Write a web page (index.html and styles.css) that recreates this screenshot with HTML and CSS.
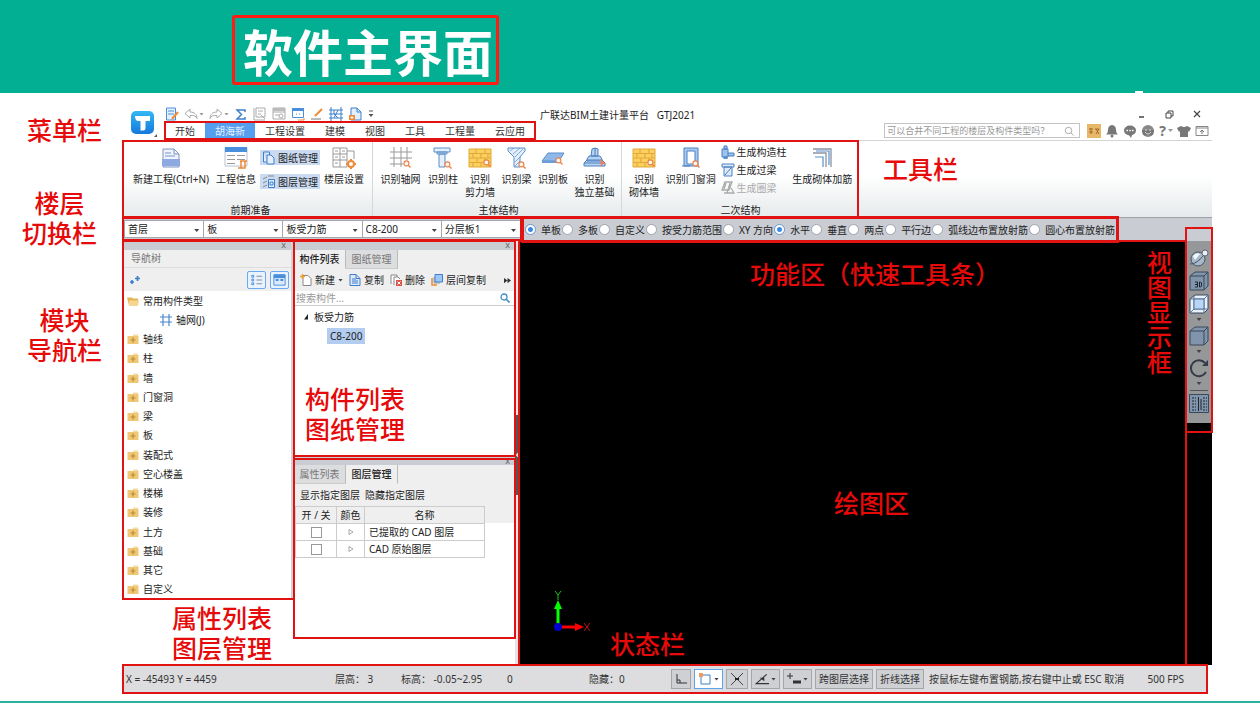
FILE: index.html
```html
<!DOCTYPE html>
<html lang="zh-CN">
<head>
<meta charset="utf-8">
<title>软件主界面</title>
<link rel="stylesheet" href="styles.css">
</head>
<body>
<svg class="defs" aria-hidden="true">
  <defs>
    <linearGradient id="blue" x1="0" y1="0" x2="0" y2="1"><stop offset="0" stop-color="#35b8f5"/><stop offset="1" stop-color="#1478dc"/></linearGradient>
    <symbol id="lens" viewBox="0 0 8 8"><circle cx="3.4" cy="3.4" r="2.5" fill="#fff5ee" stroke="#e8824a" stroke-width="1.1"/><path d="M5.2 5.2L7.5 7.5" stroke="#e8824a" stroke-width="1.4"/></symbol>
    <symbol id="wall" viewBox="0 0 24 20"><path d="M1 1h22v18H1z" fill="#fbd05f" stroke="#e2a93a"/><path d="M1 5.5h22M1 10h22M1 14.500h22M8 1v4.500M17 1v4.500M5 5.500V10M13 5.500V10M20 5.500V10M9 10v4.500M17 10v4.500M5 14.500V19M13 14.500V19" stroke="#e2a93a" stroke-width="1.100" fill="none"/><use href="#lens" x="15" y="11" width="8" height="8"/></symbol>
    <symbol id="folder" viewBox="0 0 12 11"><path d="M6 1h5v2H6z" fill="#f3dca6"/><path d="M.5 2.500h11v8H.5z" fill="#f0c875"/><path d="M3.500 6.500h5M6 4v5" stroke="#b98a35" stroke-width="1.200"/></symbol>
    <symbol id="cube" viewBox="0 0 20 20"><path d="M1 5l5-4h13v14l-4 4H1z" fill="#8094ab" stroke="#3c4858"/><path d="M1 5h14v14M15 5l4-4" fill="none" stroke="#3c4858"/></symbol>
    <symbol id="undo" viewBox="0 0 14 12"><path d="M6 1L1 5.500 6 10V7.500c4-.5 6 .5 7 3 0-4-2.500-6.500-7-6.500z" fill="none" stroke="#aaa"/></symbol>
  </defs>
</svg>

<header class="banner"><h1 class="marked">软件主界面</h1></header>

<div class="slide">
  <aside class="notes">
    <p class="note n1">菜单栏</p>
    <p class="note n2">楼层<br>切换栏</p>
    <p class="note n3">模块<br>导航栏</p>
  </aside>

  <div class="app">
    <div class="top">
      <svg class="logo" viewBox="0 0 30 30"><rect x="1" y="1" width="23" height="23" rx="5" fill="url(#blue)"/><path d="M5 6h15v5h-4.500v7q0 2.500-2.500 2.500h-2.500V11H7.500Q5 10 5 6z" fill="#fff"/><path d="M24 27l3-3v3z" fill="#555"/></svg>
      <div class="topmain">
        <div class="row1">
          <div class="qat">
            <svg class="i14" viewBox="0 0 14 14"><path d="M1.500 1h9v12h-9zM3 4h6M3 7h6" fill="#e6f1fd" stroke="#4a8fdc"/><path d="M7 12l6-7" stroke="#ef8a35" stroke-width="2"/></svg>
            <svg class="i14" viewBox="0 0 14 12"><use href="#undo"/></svg><i class="tri pale"></i>
            <svg class="i14 flip" viewBox="0 0 14 12"><use href="#undo"/></svg><i class="tri pale"></i>
            <svg class="i14" viewBox="0 0 14 14"><path d="M11 5V3H3l4.500 4.500L3 12h8v-2" fill="none" stroke="#3f7fca" stroke-width="1.500"/></svg>
            <svg class="i14" viewBox="0 0 14 14"><path d="M3 1h9v9H3zM1 1v12h11M5 4h5M5 7h3" fill="none" stroke="#aaa"/><path d="M8 8l4 4" stroke="#aaa"/></svg>
            <svg class="i14" viewBox="0 0 14 14"><path d="M1 1h12v11H1zM1 5h12M3 8h4" fill="none" stroke="#aaa"/><path d="M1 1h12v3H1z" fill="#bbb"/><circle cx="9" cy="9" r="2" fill="#fff" stroke="#aaa"/></svg>
            <svg class="i14" viewBox="0 0 14 14"><path d="M1.500 1.500h11v9h-11z" fill="#fff" stroke="#4a8fdc"/><path d="M1 1h12v3H1z" fill="#4a8fdc"/><path d="M5 7h1M8 7h1" stroke="#4a8fdc"/><path d="M7 13h6v-2" stroke="#ef8a35" fill="none"/></svg>
            <svg class="i14" viewBox="0 0 14 14"><path d="M5 9l7-7" stroke="#ef8a35" stroke-width="2"/><path d="M1 12h10" stroke="#777"/></svg>
            <svg class="i14" viewBox="0 0 14 14"><path d="M2 0v14M12 0v14M0 3h14M0 7h14M0 11h14M5 3v4l4 4M9 3L5 11" fill="none" stroke="#3f7fca"/></svg>
            <svg class="i14" viewBox="0 0 14 14"><path d="M3 1h6l4 4v8H3z" fill="#e3effc" stroke="#3f7fca"/><path d="M9 1v4h4" fill="none" stroke="#3f7fca"/><path d="M1 8h6v5H1z" fill="#ef8a35"/><path d="M2.500 10.500h3M4 9v3" stroke="#fff"/></svg>
            <svg class="i8" viewBox="0 0 8 10"><path d="M2 2h4" stroke="#555"/><path d="M1.500 5h5L4 8z" fill="#555"/></svg>
          </div>
          <div class="apptitle">广联达BIM土建计量平台 &nbsp; GTJ2021</div>
          <div class="win">
            <button aria-label="最小化"><svg viewBox="0 0 10 10"><path d="M3 8h5" stroke="#444" stroke-width="1.500"/></svg></button>
            <button aria-label="还原"><svg viewBox="0 0 10 10"><path d="M2 4h5v5H2zM4 4V2h5v5H7" fill="none" stroke="#444"/></svg></button>
            <button aria-label="关闭"><svg viewBox="0 0 10 10"><path d="M2 2l6 6M8 2L2 8" stroke="#444" stroke-width="1.200"/></svg></button>
          </div>
        </div>
        <div class="row2">
          <nav class="tabs marked"><button>开始</button><button class="on">胡海新</button><button>工程设置</button><button>建模</button><button>视图</button><button>工具</button><button>工程量</button><button>云应用</button></nav>
          <div class="tools">
            <div class="find"><input type="text" aria-label="搜索" placeholder="可以合并不同工程的楼层及构件类型吗？"><svg class="i10" viewBox="0 0 10 10"><circle cx="4.500" cy="4.500" r="3.200" fill="none" stroke="#aaa"/><path d="M7 7l2.500 2.500" stroke="#aaa"/></svg></div>
            <svg class="i14" viewBox="0 0 14 14"><path d="M0 0h14v14H0z" fill="#e8b868"/><path d="M2 5h4M2 8h4M4 4v6M8 5h4l-3 5M9 5l3 5" stroke="#a36a2c" fill="none"/></svg>
            <svg class="i14" viewBox="0 0 14 14"><path d="M7 1q4 .5 4 5 0 3 2 4.500H1Q3 9 3 6q0-4.500 4-5z" fill="#777"/><circle cx="7" cy="12" r="1.500" fill="#777"/></svg>
            <svg class="i14" viewBox="0 0 14 14"><ellipse cx="7" cy="6.500" rx="6" ry="5" fill="#777"/><path d="M6 11l2 3 1-3z" fill="#777"/><path d="M3.500 6.500h1.500M6.300 6.500h1.500M9 6.500h1.500" stroke="#fff" stroke-width="1.500"/></svg>
            <svg class="i14" viewBox="0 0 14 14"><circle cx="7" cy="7" r="6" fill="#888"/><path d="M1 6h12l-1 5H2z" fill="#777"/><path d="M4 8q3 4 6 0M4 6h2M8 6h2" fill="none" stroke="#ddd"/></svg>
            <span class="help">?<i class="tri pale"></i></span>
            <svg class="i14" viewBox="0 0 14 14"><path d="M4 2q3 2 6 0l4 2-2 4-1-1v6H3V7L2 8 0 4z" fill="#777"/></svg>
            <svg class="i14" viewBox="0 0 14 12"><path d="M1 1.500h12v9H1zM1 3h12" fill="none" stroke="#888"/><path d="M5 7l2-2 2 2M7 5.500V9" fill="none" stroke="#777"/></svg>
          </div>
        </div>
      </div>
    </div>

    <div class="ribbon">
      <div class="groups marked">
        <section class="group g1">
          <div class="items">
            <button class="it w84"><svg viewBox="0 0 20 20"><path d="M2 1h11l5 5v13H2z" fill="#eef3fc" stroke="#7e93c5"/><path d="M13 1v5h5M4 5h6M4 8h10" fill="none" stroke="#7e93c5"/><path d="M1 11h18v7H1z" fill="#8ea9e0"/></svg>新建工程(Ctrl+N)</button>
            <button class="it w46"><svg class="wide" viewBox="0 0 24 22"><path d="M1 1h22v18H1z" fill="#fff" stroke="#b8c4d0"/><path d="M1 0h22v5H1z" fill="#4a8fdc"/><path d="M3 8.500h8M3 12.500h8M3 16.500h8M13 8.500h8M13 12.500h8" stroke="#999"/><path d="M16 14h7M17 14v7h-3M21 14v7h-5" fill="none" stroke="#ef8a35" stroke-width="1.500"/></svg>工程信息</button>
            <div class="stack chips">
              <button><svg class="i14" viewBox="0 0 14 14"><path d="M1.500 1h6v3M1.500 1v10h3M5 4h4l3 3v6H5z" fill="#e3effc" stroke="#3f7fca"/></svg>图纸管理</button>
              <button><svg class="i14" viewBox="0 0 14 14"><path d="M1 4l4-2M1 8l4-2M1 12l4-2M6 1h6" stroke="#888"/><path d="M6.500 4.500h6v8h-6zM8 7h3v3H8z" fill="#e3effc" stroke="#3f7fca"/></svg>图层管理</button>
            </div>
            <button class="it w46"><svg class="wide" viewBox="0 0 24 22"><path d="M1 1h14v19H1zM1 7h14M1 13h14M8 1v19M15 4h7v8" fill="none" stroke="#999"/><path d="M3 4h3M10 4h3M3 10h3M10 10h3M3 16h3" stroke="#999"/><circle cx="19" cy="17" r="3" fill="#fff" stroke="#ef8a35" stroke-width="2"/><path d="M19 12v2M19 20v2M14 17h2M22 17h2" stroke="#ef8a35" stroke-width="2"/></svg>楼层设置</button>
          </div>
          <h2>前期准备</h2>
        </section>
        <section class="group g2">
          <div class="items">
            <button class="it w49"><svg class="wide" viewBox="0 0 24 22"><path d="M5 0v20M12 0v20M18 0v13M1 5h22M1 11h22M1 17h13" stroke="#999" fill="none"/><use href="#lens" x="14" y="13" width="8" height="8"/></svg>识别轴网</button>
            <button class="it w36"><svg viewBox="0 0 20 22"><path d="M1 1h16v4H1zM4 5h10v2H4zM6 7h6v13H6z" fill="#e3effc" stroke="#5a8fc8"/><use href="#lens" x="11" y="14" width="8" height="8"/></svg>识别柱</button>
            <button class="it w38"><svg class="wide" viewBox="0 0 24 20"><use href="#wall"/></svg>识别<br>剪力墙</button>
            <button class="it w35"><svg viewBox="0 0 20 22"><path d="M1 1h17v3l-5 6v10H7V10L1 4z" fill="#e3effc" stroke="#5a8fc8"/><path d="M3 4l4-3M6 7l7-6M8 10l8-8M8 15l5-5M8 19l5-5" stroke="#5a8fc8" stroke-width=".7"/><use href="#lens" x="11" y="14" width="8" height="8"/></svg>识别梁</button>
            <button class="it w38"><svg class="wide" viewBox="0 0 24 20"><path d="M7 5h16l-5 8H1z" fill="#8fb8ea" stroke="#5a8fc8"/><path d="M1 13h17v2H1z" fill="#6d9cd8"/><use href="#lens" x="14" y="9" width="8" height="8"/></svg>识别板</button>
            <button class="it w45"><svg class="wide" viewBox="0 0 24 22"><path d="M1 16l3-3h15l3 3v3H1zM4 12l2-3h11l2 3v2H4zM8 9l1-7 3-1 3 1v7z" fill="#b8d3f2" stroke="#4a80c0"/><path d="M12 1v8M1 16h21" fill="none" stroke="#4a80c0"/><path d="M17 12l6 5h-3l-2 3z" fill="#ee8262"/></svg>识别<br>独立基础</button>
          </div>
          <h2>主体结构</h2>
        </section>
        <section class="group g3">
          <div class="items">
            <button class="it w40"><svg class="wide" viewBox="0 0 24 20"><use href="#wall"/></svg>识别<br>砌体墙</button>
            <button class="it w54"><svg viewBox="0 0 20 22"><path d="M3 1h14v18H3z" fill="#a9caf2" stroke="#4a80c0"/><path d="M6 4h8v13H6z" fill="#fff" stroke="#4a80c0"/><path d="M1 19h8" stroke="#4a80c0"/><use href="#lens" x="11" y="13" width="8" height="8"/></svg>识别门窗洞</button>
            <div class="stack plain">
              <button><svg class="i14" viewBox="0 0 14 14"><path d="M3 1h3v3H3zM1 4h6v8H1zM3 12h3v2H3zM7 8h6v3H7" fill="#9cc2ee" stroke="#4a80c0"/></svg>生成构造柱</button>
              <button><svg class="i14" viewBox="0 0 14 14"><path d="M1 1h12v3H1zM3 4h8v9H3z" fill="#dceafa" stroke="#4a80c0"/><path d="M4 12l6-7" stroke="#4a80c0"/></svg>生成过梁</button>
              <button disabled><svg class="i14" viewBox="0 0 14 14"><path d="M4 1h7L8 9H1zM3 12h10L10 7M5 2l-2 6M9 2L6 12" fill="none" stroke="#aaa" stroke-width="1.300"/></svg>生成圈梁</button>
            </div>
            <button class="it w70"><svg viewBox="0 0 20 20"><path d="M1 1h18v18M1 5h13v14" fill="none" stroke="#8a94a4" stroke-width="1.300"/><path d="M3 9h8v10M4 3h13v14" fill="none" stroke="#5a8fc8" stroke-width="1.200"/></svg>生成砌体加筋</button>
          </div>
          <h2>二次结构</h2>
        </section>
      </div>
      <p class="note">工具栏</p>
    </div>

    <div class="bar">
      <div class="picks marked">
        <label class="sel"><select aria-label="楼层"><option>首层</option></select></label>
        <label class="sel"><select aria-label="构件"><option>板</option></select></label>
        <label class="sel"><select aria-label="类型"><option>板受力筋</option></select></label>
        <label class="sel"><select aria-label="名称"><option>C8-200</option></select></label>
        <label class="sel"><select aria-label="分层"><option>分层板1</option></select></label>
      </div>
      <div class="opts marked">
        <label><input type="radio" name="area" checked>单板</label>
        <label><input type="radio" name="area">多板</label>
        <label><input type="radio" name="area">自定义</label>
        <label><input type="radio" name="area">按受力筋范围</label>
        <label><input type="radio" name="dir">XY 方向</label>
        <label><input type="radio" name="dir" checked>水平</label>
        <label><input type="radio" name="dir">垂直</label>
        <label><input type="radio" name="dir">两点</label>
        <label><input type="radio" name="dir">平行边</label>
        <label><input type="radio" name="dir">弧线边布置放射筋</label>
        <label><input type="radio" name="dir">圆心布置放射筋</label>
      </div>
    </div>

    <main class="work">
      <div class="nav">
        <div class="navbox marked">
          <div class="strip">x</div>
          <div class="navtitle">导航树</div>
          <div class="navtools">
            <svg class="i12" viewBox="0 0 12 12"><path d="M1 8h4M3 6v4M6 4.500h5M8.500 2v5" stroke="#3f7fca" stroke-width="1.700"/></svg>
            <button aria-label="列表"><svg viewBox="0 0 16 14"><path d="M3 2h2v2H3zM3 6h2v2H3zM3 10h2v2H3z" fill="none" stroke="#4a8fdc"/><path d="M8 3h6M8 7h6M8 11h6" stroke="#888"/></svg></button>
            <button aria-label="图标"><svg viewBox="0 0 16 14"><path d="M2 1.500h12v11H2z" fill="#dceafa" stroke="#4a8fdc"/><path d="M2 1h12v4H2z" fill="#4a8fdc"/><path d="M4 7h3M9 7h3" stroke="#4a8fdc" stroke-width="2"/></svg></button>
          </div>
          <ul class="tree">
            <li><svg viewBox="0 0 12 11"><path d="M0 2h5l1 1h5v7H2z" fill="#e6b455"/><path d="M2 5h10l-1 5H2z" fill="#f6d58c"/></svg>常用构件类型</li>
            <li class="sub"><svg viewBox="0 0 12 12"><path d="M3 0v12M9 0v12M0 3h12M0 8h12" stroke="#4a86cc" stroke-width="1.200"/></svg>轴网(J)</li>
            <li><svg><use href="#folder"/></svg>轴线</li>
            <li><svg><use href="#folder"/></svg>柱</li>
            <li><svg><use href="#folder"/></svg>墙</li>
            <li><svg><use href="#folder"/></svg>门窗洞</li>
            <li><svg><use href="#folder"/></svg>梁</li>
            <li><svg><use href="#folder"/></svg>板</li>
            <li><svg><use href="#folder"/></svg>装配式</li>
            <li><svg><use href="#folder"/></svg>空心楼盖</li>
            <li><svg><use href="#folder"/></svg>楼梯</li>
            <li><svg><use href="#folder"/></svg>装修</li>
            <li><svg><use href="#folder"/></svg>土方</li>
            <li><svg><use href="#folder"/></svg>基础</li>
            <li><svg><use href="#folder"/></svg>其它</li>
            <li><svg><use href="#folder"/></svg>自定义</li>
          </ul>
        </div>
        <p class="note">属性列表<br>图层管理</p>
      </div>

      <div class="panels">
        <section class="comp marked">
          <div class="strip">x</div>
          <div class="ptabs"><button class="on">构件列表</button><button>图纸管理</button></div>
          <div class="ptools">
            <button><svg class="i12" viewBox="0 0 12 12"><path d="M3 1.500h5l3 3v7H3z" fill="#fff" stroke="#888"/><path d="M0 2.500h5M2.500 0v5" stroke="#f0a030" stroke-width="1.500"/></svg>新建<i class="tri"></i></button>
            <button><svg class="i12" viewBox="0 0 12 12"><path d="M1 .5h6l4 4v7H1z" fill="#dceafa" stroke="#3f7fca"/><path d="M3 5h4M3 7h6M3 9h6M7 .5v4h4" fill="none" stroke="#3f7fca"/></svg>复制</button>
            <button><svg class="i12" viewBox="0 0 12 12"><path d="M1 10V1h6v2M4 11V3h4l2 2" fill="#fff" stroke="#888"/><path d="M6 6h6v6H6z" fill="#d9534f"/><path d="M7.500 7.500l3 3M10.500 7.500l-3 3" stroke="#fff"/></svg>删除</button>
            <button><svg class="i12" viewBox="0 0 12 12"><path d="M1 4v7h5" fill="none" stroke="#ef8a35" stroke-width="1.500"/><path d="M3 3v6h6" fill="none" stroke="#999"/><path d="M4 .5h7.500V8H4z" fill="#9cc8f7" stroke="#3f7fca"/></svg>层间复制</button>
            <svg class="more" viewBox="0 0 8 8"><path d="M0 1l4 3-4 3zM4 1l4 3-4 3z" fill="#333"/></svg>
          </div>
          <div class="psearch"><input type="text" aria-label="搜索构件" placeholder="搜索构件..."><svg class="i10" viewBox="0 0 10 10"><circle cx="4" cy="4" r="3" fill="none" stroke="#3f8fc0" stroke-width="1.300"/><path d="M6.500 6.500L9.500 9.500" stroke="#3f8fc0" stroke-width="1.600"/></svg></div>
          <div class="ctree">
            <div><svg class="caret" viewBox="0 0 6 6"><path d="M5 0v5.500H1z" fill="#222"/></svg>板受力筋</div>
            <span class="picked">C8-200</span>
          </div>
          <p class="note">构件列表<br>图纸管理</p>
        </section>
        <section class="props marked">
          <div class="strip">x</div>
          <div class="ptabs"><button>属性列表</button><button class="on">图层管理</button></div>
          <div class="links"><button>显示指定图层</button><button>隐藏指定图层</button></div>
          <div class="tablewrap">
            <table>
              <colgroup><col class="c1"><col class="c2"><col></colgroup>
              <thead><tr><th>开 / 关</th><th>颜色</th><th>名称</th></tr></thead>
              <tbody>
                <tr><td><input type="checkbox" aria-label="已提取的 CAD 图层"></td><td><svg class="caret" viewBox="0 0 6 6"><path d="M1 .5l4 2.500-4 2.500z" fill="none" stroke="#888" stroke-width=".7"/></svg></td><td class="nm">已提取的 CAD 图层</td></tr>
                <tr><td><input type="checkbox" aria-label="CAD 原始图层"></td><td><svg class="caret" viewBox="0 0 6 6"><path d="M1 .5l4 2.500-4 2.500z" fill="none" stroke="#888" stroke-width=".7"/></svg></td><td class="nm">CAD 原始图层</td></tr>
              </tbody>
            </table>
          </div>
        </section>
      </div>

      <div class="split"><button aria-label="折叠"><svg viewBox="0 0 4 6"><path d="M3.500 0v6L.5 3z" fill="#ddd"/></svg></button></div>

      <div class="canvas">
        <div class="stage marked">
          <p class="note func">功能区（快速工具条）</p>
          <p class="note draw">绘图区</p>
          <p class="note stat">状态栏</p>
          <p class="note view">视图显示框</p>
          <svg class="axis" viewBox="0 0 48 42"><path d="M14 38V18" stroke="#0f0" stroke-width="3"/><path d="M14 10l4 9h-8z" fill="#0f0"/><path d="M14 37h18" stroke="#f00" stroke-width="3"/><path d="M40 37l-9-4v8z" fill="#f00"/><circle cx="14" cy="37" r="4" fill="#00c"/><path d="M11 1l3 4 3-4M14 5v5" fill="none" stroke="#1dc41d"/><path d="M40 33l6 8M46 33l-6 8" stroke="#c01010"/></svg>
        </div>
        <div class="side marked">
          <div class="viewbar">
            <svg viewBox="0 0 20 20"><circle cx="9" cy="11" r="7" fill="#a9b8c8" stroke="#465465"/><path d="M4 8q3-4 7-2l-5 6z" fill="#f2f6fa"/><path d="M1 16Q8 17 18 3" fill="none" stroke="#465465"/><circle cx="16" cy="5" r="3" fill="#e8eff5" stroke="#667"/></svg>
            <svg viewBox="0 0 20 20"><use href="#cube"/><path d="M6 11h2.500v5H6M6 13.500h2.500M10.500 11v5h1l1-1v-3l-1-1z" fill="none" stroke="#1c2430"/></svg>
            <svg viewBox="0 0 20 20"><path d="M1 5l5-4h13v14l-4 4H1z" fill="#e6f2ff" stroke="#3c4858"/><path d="M1 5h14v14M15 5l4-4M5 1v14h14M5 15l-4 4" fill="none" stroke="#5b7290"/><path d="M5 5h10v10H5z" fill="#b7d6f7" stroke="#5b7290"/></svg>
            <i class="tri"></i>
            <svg viewBox="0 0 20 20"><use href="#cube"/></svg>
            <i class="tri"></i>
            <svg viewBox="0 0 20 20"><path d="M16 5A8 8 0 1 0 17 14" fill="none" stroke="#333c48" stroke-width="2"/><path d="M19 2v6h-6z" fill="#333c48"/></svg>
            <i class="tri"></i>
            <hr>
            <svg viewBox="0 0 20 20"><path d="M.5.5h19v18H.5z" fill="#8094ab" stroke="#3c4858"/><path d="M3 4h4M3 7h4M3 10h4M3 13h4M3 16h4M14 4h4M14 7h4M14 10h4M14 13h4M14 16h4" stroke="#1c2430" stroke-dasharray="2 1"/><path d="M9.500 3v14M12 5v11" stroke="#1c2430"/></svg>
          </div>
        </div>
      </div>
    </main>

    <footer class="status marked">
      <span class="s1">X = -45493 Y = 4459</span>
      <span class="s2">层高： 3</span>
      <span class="s3">标高： -0.05~2.95</span>
      <span class="s4">0</span>
      <span class="s5">隐藏：0</span>
      <div class="sbtns">
        <button aria-label="正交"><svg class="i12" viewBox="0 0 12 12"><path d="M2 1v9h10M2 7h3v3" fill="none" stroke="#333"/></svg></button>
        <button class="hot" aria-label="矩形"><svg class="i14" viewBox="0 0 14 14"><path d="M3 3h9v9H3z" fill="#fff" stroke="#3f7fca"/><path d="M1 1h4v4H1z" fill="#f09a60"/></svg><i class="tri"></i></button>
        <button aria-label="交点"><svg class="i14" viewBox="0 0 14 14"><path d="M1 1l12 12M13 1L1 13" stroke="#444"/><path d="M5 7h4" stroke="#222" stroke-width="2"/></svg></button>
        <button aria-label="角度"><svg class="i14" viewBox="0 0 12 12"><path d="M10 2L1 10h11" fill="none" stroke="#333"/><path d="M4 5h4v3z" fill="#333"/></svg><i class="tri"></i></button>
        <button aria-label="偏移"><svg class="i14" viewBox="0 0 14 14"><path d="M0 4h6M3 1v6" stroke="#333"/><path d="M6 10h8" stroke="#333" stroke-width="3"/></svg><i class="tri"></i></button>
        <button>跨图层选择</button>
        <button>折线选择</button>
      </div>
      <span class="s6">按鼠标左键布置钢筋,按右键中止或 ESC 取消</span>
      <span class="s7">500 FPS</span>
    </footer>
  </div>
</div>
<div class="rule"></div>
</body>
</html>
```
FILE: styles.css
```css
* { box-sizing: border-box; }

body {
  margin: 0;
  min-height: 100vh;
  display: flex;
  flex-direction: column;
  background: #fff;
  color: #222;
  font: 10px/14px "Noto Sans", "Noto Sans CJK SC", sans-serif;
}

h1, h2, p, ul { margin: 0; padding: 0; }
svg { display: block; flex: none; }
button {
  border: 0;
  padding: 0;
  background: none;
  color: inherit;
  font: inherit;
  white-space: nowrap;
}
input, select { font: inherit; color: inherit; margin: 0; }

.defs { position: absolute; width: 0; height: 0; }
.i8 { width: 8px; height: 10px; }
.i10 { width: 10px; height: 10px; }
.i12 { width: 12px; height: 12px; }
.i14 { width: 14px; height: 14px; }
.flip { transform: scaleX(-1); }
.tri {
  width: 5px;
  height: 3px;
  flex: none;
  background: #444;
  clip-path: polygon(0 0, 100% 0, 50% 100%);
}
.tri.pale { background: #999; }

/* Red frame round a described region */
.marked { position: relative; }
.marked::after {
  content: "";
  position: absolute;
  inset: -1px;
  border: 2px solid #e01212;
  pointer-events: none;
  z-index: 2;
}

.note {
  color: #e60a0a;
  font: 500 25px/30px "Liberation Serif", "Noto Sans CJK SC", serif;
  white-space: nowrap;
}

.banner {
  height: 93px;
  padding: 16px 0 0 233px;
  background: linear-gradient(#fff, #fff) 1135px bottom / 8px 2px no-repeat, #02af92;
}
.banner h1 {
  width: max-content;
  padding: 0 5px 0 10px;
  color: #fff;
  font: bold 50px/68px "Noto Sans CJK SC", sans-serif;
}
.banner h1::after { border: 3px solid #ff1c12; border-radius: 3px; }

.slide {
  flex: 1;
  display: grid;
  grid-template-columns: 123px 1fr;
  padding-right: 48px;
}
.notes { padding: 24px 0 0 6px; text-align: center; }
.n2 { margin: 43px 10px 0 0; }
.n3 { margin-top: 57px; }

.app { display: flex; flex-direction: column; padding-top: 13px; min-width: 0; }

.top { display: flex; border-bottom: 1px solid #d4d4d4; }
.logo { width: 30px; height: 30px; margin: 4px 5px 0 7px; }
.topmain { flex: 1; }
.row1 { display: flex; align-items: center; height: 16px; }
.qat { display: flex; align-items: center; gap: 5px; width: 375px; }
.qat .tri { margin-left: -4px; }
.apptitle { flex: 1; padding: 2px 0 0; }
.win { display: flex; gap: 18px; padding-right: 10px; }
.win svg { width: 10px; height: 10px; }
.row2 { display: flex; justify-content: space-between; height: 17px; }
.tabs { display: flex; }
.tabs button { padding: 0 10px; color: #333; }
.tabs .on { background: #559fee; color: #e4f1ff; }
.tools { display: flex; align-items: center; gap: 4px; padding-right: 3px; }
.find {
  display: flex;
  align-items: center;
  width: 196px;
  height: 15px;
  padding-right: 5px;
  margin-right: 3px;
  border: 1px solid #c4c4c4;
}
.find input { flex: 1; min-width: 0; height: 13px; padding: 0 2px; border: 0; font-size: 9px; }
input::placeholder { color: #999; opacity: 1; }
.help { display: flex; align-items: center; gap: 2px; color: #777; font-size: 14px; font-weight: bold; }

.ribbon {
  display: flex;
  height: 76px;
  background: linear-gradient(#fff 45%, #e6eaec);
}
.groups { display: flex; }
.group { display: flex; flex-direction: column; justify-content: space-between; border-right: 1px solid #d5d8da; }
.g1 { width: 250px; padding-left: 6px; }
.g2 { width: 249px; padding-left: 3px; }
.g3 { width: 236px; padding-left: 2px; }
.group h2 { font: inherit; text-align: center; }
.items { display: flex; }
.it {
  display: flex;
  flex-direction: column;
  align-items: center;
  padding-top: 6px;
  line-height: 13px;
}
.it svg { width: 20px; height: 22px; margin-bottom: 4px; }
.it svg.wide { width: 24px; }
.w35 { width: 35px; }
.w36 { width: 36px; }
.w38 { width: 38px; }
.w40 { width: 40px; }
.w45 { width: 45px; }
.w46 { width: 46px; }
.w49 { width: 49px; }
.w54 { width: 54px; }
.w70 { width: 70px; }
.w84 { width: 84px; }
.stack { display: flex; flex-direction: column; align-items: flex-start; }
.stack button { display: flex; align-items: center; gap: 2px; }
.stack button:disabled { color: #aaa; }
.chips { width: 62px; padding: 9px 0 0 1px; gap: 9px; }
.chips button { height: 15px; padding: 0 2px; background: #c9daf1; }
.plain { width: 70px; padding: 4px 0 0 3px; gap: 4px; }
.ribbon > .note { margin: 15px 0 0 25px; }

.bar {
  display: flex;
  height: 24px;
  border-top: 1px solid #9ea2a6;
  background: #c9ccd2;
}
.picks { display: flex; width: 398px; padding: 2px 0 3px 2px; }
.picks::after { bottom: 0; }
.sel { position: relative; flex: 1; border: 1px solid #a4a8ae; margin-left: -1px; background: #fff; }
.sel::after {
  content: "";
  position: absolute;
  right: 4px;
  top: 8px;
  width: 5px;
  height: 3px;
  background: #444;
  clip-path: polygon(0 0, 100% 0, 50% 100%);
}
.sel select { display: block; width: 100%; height: 16px; padding: 0 3px; border: 0; background: none; appearance: none; }
.opts { display: flex; align-items: center; gap: 1px; padding: 0 4px; margin: -2px 0; }
.opts::after { border-width: 3px; inset: 0; }
.opts label { display: flex; align-items: center; gap: 5px; white-space: nowrap; }
.opts input {
  appearance: none;
  width: 11px;
  height: 11px;
  border: 1px solid #a0a4aa;
  border-radius: 50%;
  background: #fff;
}
.opts input:checked { background: radial-gradient(circle, #3d8ae6 2px, #fff 3px); border-color: #6d9bd0; }

.work { flex: 1; display: flex; }
.strip { height: 9px; padding-right: 5px; background: #c9ccd2; color: #666; font-size: 9px; line-height: 8px; text-align: right; }

.nav { width: 171px; display: flex; flex-direction: column; }
.navbox { flex: 1; display: flex; flex-direction: column; border-right: 3px solid #d0d2d5; }
.navbox::after { right: -4px; }
.navtitle { height: 18px; padding: 1px 8px; background: #efefef; color: #777; border-bottom: 1px solid #ddd; }
.navtools { display: flex; align-items: center; gap: 4px; height: 23px; padding: 0 2px 0 6px; background: #efefef; }
.navtools .i12 { margin-right: auto; }
.navtools button { width: 19px; height: 18px; padding: 1px; border: 1px solid #6aaaf0; border-radius: 2px; background: #e9f3ff; }
.navtools button svg { width: 15px; height: 14px; }
.tree { flex: 1; display: flex; flex-direction: column; list-style: none; }
.tree li { flex: 1; display: flex; align-items: center; gap: 4px; padding-left: 4px; }
.tree li svg { width: 12px; height: 12px; }
.tree .sub { padding-left: 37px; }
.nav > .note { height: 66px; padding: 6px 0 0 49px; }

.panels { width: 221px; display: flex; flex-direction: column; }
.comp { height: 218px; border-bottom: 3px solid #c9ccd2; display: flex; flex-direction: column; }
.ptabs { display: flex; height: 19px; background: #efefef; }
.ptabs button { width: 52px; border-right: 1px solid #bbb; background: #dcdddf; color: #777; border-bottom: 1px solid #ccc; }
.ptabs .on { background: #efefef; color: #222; border-bottom-color: #efefef; font-weight: 500; }
.ptools { display: flex; align-items: center; gap: 6px; height: 22px; padding: 0 4px 0 6px; background: #efefef; }
.ptools button { display: flex; align-items: center; gap: 3px; }
.more { width: 7px; height: 7px; margin-left: auto; }
.psearch { display: flex; align-items: center; height: 15px; padding-right: 5px; border-bottom: 1px solid #ccc; }
.psearch input { flex: 1; min-width: 0; border: 0; padding: 0 2px; height: 13px; }
.ctree { padding: 4px 0 0 9px; }
.ctree div { display: flex; align-items: center; gap: 5px; }
.caret { width: 6px; height: 6px; }
.picked { display: inline-block; margin: 4px 0 0 24px; padding: 1px 3px; background: #b3cdf0; }
.comp .note { padding: 42px 0 0 11px; }
.props { height: 179px; }
.props .strip { height: 6px; line-height: 4px; }
.links { display: flex; align-items: center; gap: 5px; height: 22px; padding-left: 6px; background: #efefef; }
.tablewrap { background: linear-gradient(#efefef 17px, #fff 17px); padding: 0 30px 0 1px; }
table { width: 100%; border-collapse: collapse; table-layout: fixed; }
.c1 { width: 41px; }
.c2 { width: 28px; }
th, td { height: 17px; padding: 0; border: 1px solid #ccc; text-align: center; font-weight: normal; line-height: 14px; white-space: nowrap; }
td .caret { margin: auto; }
td.nm { padding-left: 4px; text-align: left; }
td input { appearance: none; display: block; width: 11px; height: 11px; margin: 0 auto; border: 1px solid #999; background: #fff; }

.split { width: 4px; padding-top: 174px; background: #e4e4e6; }
.split button { display: flex; align-items: center; width: 4px; height: 80px; background: #555; }
.split svg { width: 4px; height: 6px; }

.canvas { flex: 1; display: flex; background: #000; }
.stage { flex: 1; }
.stage .note { position: absolute; }
.func { left: 231px; top: 20px; }
.draw { left: 315px; top: 249px; }
.stat { left: 91px; bottom: 4px; }
.view { right: 14px; top: 10px; width: 25px; white-space: normal; }
.stage .view { line-height: 25px; }
.axis { position: absolute; left: 25px; bottom: 33px; width: 48px; height: 42px; }
.side { width: 26px; height: 204px; margin-top: -13px; padding-top: 13px; }
.viewbar {
  display: flex;
  flex-direction: column;
  align-items: center;
  gap: 3px;
  padding: 7px 0 9px;
  background: #969798;
}
.viewbar svg { width: 20px; height: 20px; }
.viewbar .tri { margin: 1px 0 2px; }
.viewbar hr { width: 18px; height: 1px; margin: 0; border: 0; background: #555; }

.status {
  display: flex;
  align-items: center;
  height: 28px;
  margin-right: 5px;
  padding-left: 3px;
  background: #dddddf;
  color: #333;
  white-space: nowrap;
}
.s1 { width: 209px; }
.s2 { width: 66px; }
.s3 { width: 106px; }
.s4 { width: 82px; }
.s5 { width: 82px; }
.sbtns { display: flex; gap: 3px; }
.sbtns button { display: flex; align-items: center; gap: 2px; height: 20px; padding: 0 3px; border: 1px solid #a4a6aa; background: #cfd0d3; }
.sbtns .hot { background: #fff; border-color: #5aa5ee; }
.s6 { margin: 0 auto 0 5px; }
.s7 { padding-right: 23px; }

.rule { height: 2px; margin-top: 8px; background: #2bb39c; }
```
